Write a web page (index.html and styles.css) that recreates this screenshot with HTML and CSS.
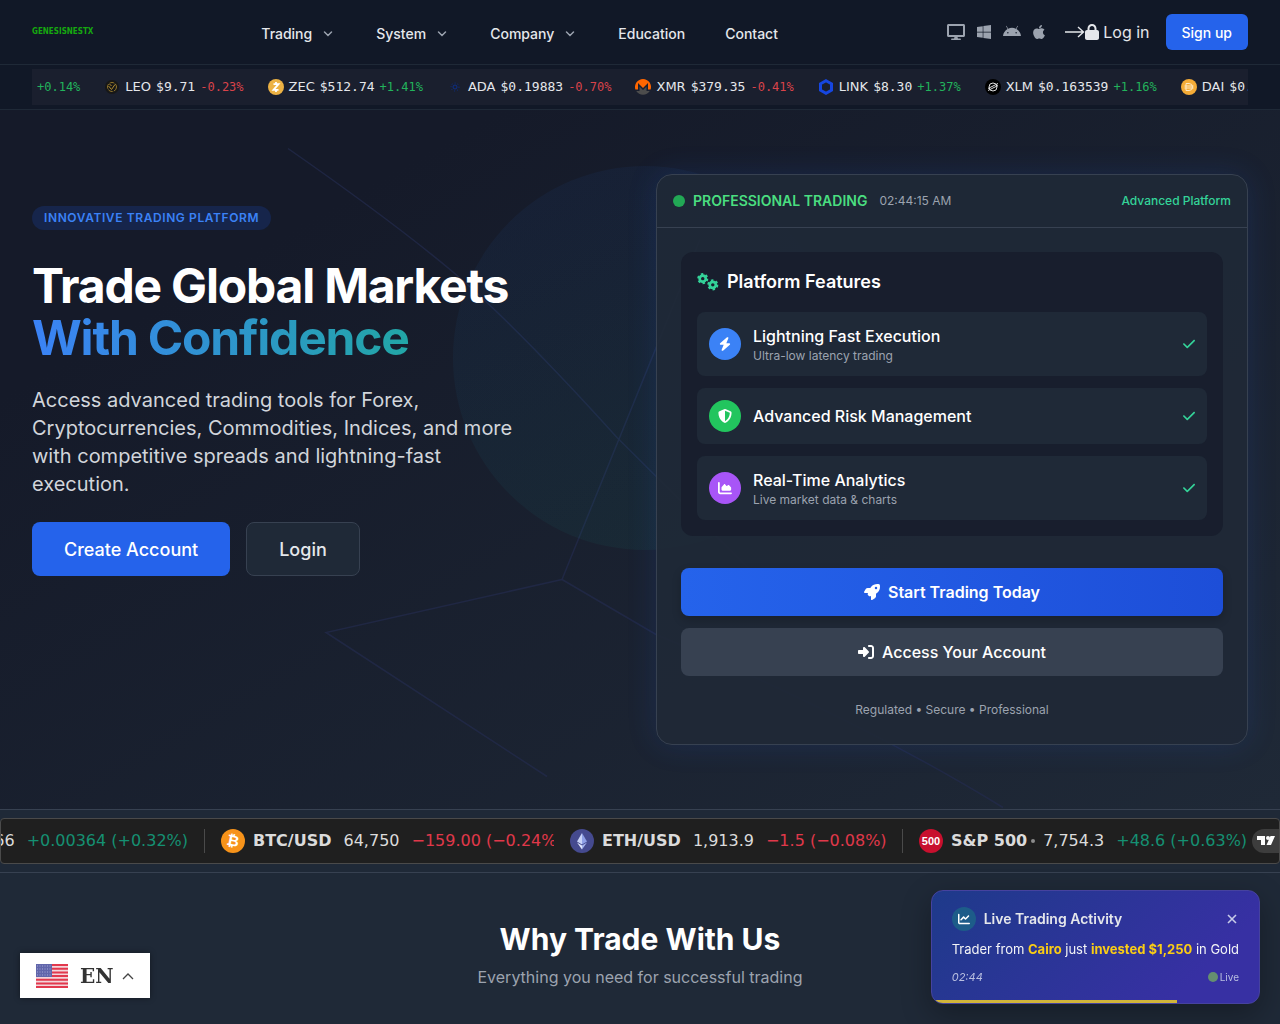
FILE: index.html
```html
<!DOCTYPE html>
<html lang="en">
<head>
  <meta charset="UTF-8">
  <meta name="viewport" content="width=device-width, initial-scale=1.0">
  <title>GenesisNestX</title>
  <link rel="stylesheet" href="styles.css">
</head>
<body>

  <header class="header">
    <a href="#" class="logo">GENESISNESTX</a>

    <nav class="nav">
      <button class="nav-link">Trading <svg class="chevron" viewBox="0 0 16 16"><path d="M4.500 6l3.500 3.500 3.500-3.500"/></svg></button>
      <button class="nav-link">System <svg class="chevron" viewBox="0 0 16 16"><path d="M4.500 6l3.500 3.500 3.500-3.500"/></svg></button>
      <button class="nav-link">Company <svg class="chevron" viewBox="0 0 16 16"><path d="M4.500 6l3.500 3.500 3.500-3.500"/></svg></button>
      <a href="#" class="nav-link">Education</a>
      <a href="#" class="nav-link">Contact</a>
    </nav>

    <div class="header-right">
      <div class="platforms">
        <a href="#" aria-label="Desktop"><svg width="18" height="16" viewBox="0 0 576 512"><path d="M528 0H48C21.500 0 0 21.500 0 48v320c0 26.500 21.500 48 48 48h192l-16 48h-72c-13.300 0-24 10.700-24 24s10.700 24 24 24h272c13.300 0 24-10.700 24-24s-10.700-24-24-24h-72l-16-48h192c26.500 0 48-21.500 48-48V48c0-26.500-21.500-48-48-48zm-16 352H64V64h448v288z"/></svg></a>
        <a href="#" aria-label="Windows"><svg width="14" height="16" viewBox="0 0 448 512"><path d="M0 93.700l183.600-25.300v177.400H0V93.700zm0 324.600l183.600 25.300V268.400H0v149.900zm203.800 28L448 480V268.400H203.800v177.900zm0-380.600v180.100H448V32L203.800 65.700z"/></svg></a>
        <a href="#" aria-label="Android"><svg width="18" height="16" viewBox="0 0 576 512"><path d="M420.550,301.930a24,24,0,1,1,24-24,24,24,0,0,1-24,24m-265.100,0a24,24,0,1,1,24-24,24,24,0,0,1-24,24m273.700-144.480,47.940-83a10,10,0,1,0-17.270-10h0l-48.540,84.070a301.250,301.250,0,0,0-246.560,0L116.180,64.450a10,10,0,1,0-17.270,10h0l47.940,83C64.530,202.220,8.240,285.550,0,384H576c-8.240-98.450-64.540-181.780-146.850-226.550"/></svg></a>
        <a href="#" aria-label="Apple"><svg width="12" height="16" viewBox="0 0 384 512"><path d="M318.700 268.700c-.2-36.700 16.400-64.400 50-84.800-18.800-26.900-47.200-41.700-84.700-44.600-35.500-2.800-74.300 20.700-88.500 20.700-15 0-49.400-19.700-76.400-19.700C63.300 141.200 4 184.800 4 273.500q0 39.300 14.400 81.200c12.800 36.700 59 126.700 107.200 125.200 25.200-.6 43-17.900 75.800-17.900 31.800 0 48.300 17.900 76.400 17.900 48.600-.7 90.400-82.500 102.600-119.300-65.200-30.700-61.700-90-61.700-91.900zm-56.600-164.200c27.300-32.400 24.800-61.900 24-72.500-24.100 1.400-52 16.400-67.900 34.900-17.500 19.800-27.800 44.300-25.600 71.900 26.100 2 49.900-11.400 69.500-34.300z"/></svg></a>
      </div>
      <a href="#" class="login-link">
        <svg class="login-arrow" width="20" height="16" viewBox="0 0 20 16"><path d="M0 8h18M13 3l5.500 5-5.500 5"/></svg>
        <svg width="14" height="16" viewBox="0 0 448 512"><path fill="currentColor" d="M144 144v48H304V144c0-44.200-35.800-80-80-80s-80 35.800-80 80zM80 192V144C80 64.500 144.500 0 224 0s144 64.500 144 144v48h16c35.300 0 64 28.700 64 64V448c0 35.300-28.700 64-64 64H64c-35.300 0-64-28.700-64-64V256c0-35.300 28.700-64 64-64H80z"/></svg>
        <span>Log in</span>
      </a>
      <button class="btn-signup">Sign up</button>
    </div>
  </header>

  <div class="coin-bar">
    <div class="coin-track">
      <div class="coin"><span class="change up">+0.14%</span></div>
      <div class="coin">
        <svg width="16" height="16" viewBox="0 0 16 16"><circle cx="8" cy="8" r="7" fill="#171717"/><circle cx="8" cy="8" r="4.500" fill="none" stroke="#8f742c" stroke-dasharray="5 1"/><path d="M4.500 7l3 3.500 3.500-5M5.500 5l2 2" fill="none" stroke="#b08c30"/></svg>
        <span class="sym">LEO</span><span class="price">$9.71</span><span class="change down">-0.23%</span>
      </div>
      <div class="coin">
        <svg width="16" height="16" viewBox="0 0 16 16"><circle cx="8" cy="8" r="8" fill="#ecb244"/><path d="M5.500 5.200h5l-5 5.600h5M8 3v2M8 11v2" fill="none" stroke="#fff" stroke-width="1.800"/></svg>
        <span class="sym">ZEC</span><span class="price">$512.74</span><span class="change up">+1.41%</span>
      </div>
      <div class="coin">
        <svg width="16" height="16" viewBox="0 0 16 16" fill="none" stroke="#0c2f8a"><circle cx="8" cy="8" r="2"/><circle cx="8" cy="8" r="4" stroke-dasharray="1 2"/></svg>
        <span class="sym">ADA</span><span class="price">$0.19883</span><span class="change down">-0.70%</span>
      </div>
      <div class="coin">
        <svg width="16" height="16" viewBox="0 0 16 16"><path d="M8 0a8 8 0 0 0-7.600 10.500H3V4l5 5 5-5v6.500h2.600A8 8 0 0 0 8 0z" fill="#f60"/><path d="M1.200 12H4.500V7.500L8 11l3.500-3.500V12h3.300A8 8 0 0 1 1.200 12z" fill="#4c4c4c"/></svg>
        <span class="sym">XMR</span><span class="price">$379.35</span><span class="change down">-0.41%</span>
      </div>
      <div class="coin">
        <svg width="16" height="16" viewBox="0 0 16 16"><path d="M8 1.700l5.500 3.100v6.400L8 14.300l-5.500-3.100V4.800z" fill="none" stroke="#1646e0" stroke-width="3"/></svg>
        <span class="sym">LINK</span><span class="price">$8.30</span><span class="change up">+1.37%</span>
      </div>
      <div class="coin">
        <svg width="16" height="16" viewBox="0 0 16 16"><circle cx="8" cy="8" r="8" fill="#000"/><g fill="none" stroke="#ddd"><circle cx="8" cy="8" r="4"/><path d="M3 9.500L13 4.500M3 11.500L13 6.500"/></g></svg>
        <span class="sym">XLM</span><span class="price">$0.163539</span><span class="change up">+1.16%</span>
      </div>
      <div class="coin">
        <svg width="16" height="16" viewBox="0 0 16 16"><circle cx="8" cy="8" r="8" fill="#f5ac37"/><path d="M5 4.500h3a3.500 3.500 0 0 1 0 7H5zM3.500 7h9M3.500 9h9" fill="none" stroke="#ffe9c4"/></svg>
        <span class="sym">DAI</span><span class="price">$0.99982</span><span class="change up">+0.01%</span>
      </div>
    </div>
  </div>

  <section class="hero">
    <!-- decorative network lines and blob -->
    <svg class="hero-lines" viewBox="0 0 1280 700" preserveAspectRatio="xMidYMid slice">
      <path d="M288 39Q390 110 450 160T617 328L760 470M700 130L562 470M562 470L326 523L547 667M562 470L656 525Q860 610 1003 698"/>
    </svg>
    <div class="hero-blob"></div>

    <div class="hero-text">
      <span class="badge">INNOVATIVE TRADING PLATFORM</span>
      <h1>Trade Global Markets <span class="gradient-text">With Confidence</span></h1>
      <p>Access advanced trading tools for Forex, Cryptocurrencies, Commodities, Indices, and more with competitive spreads and lightning-fast execution.</p>
      <div class="hero-buttons">
        <button class="btn-create">Create Account</button>
        <button class="btn-login">Login</button>
      </div>
    </div>

    <div class="card">
      <div class="card-head">
        <span class="dot"></span>
        <span class="card-title">PROFESSIONAL TRADING</span>
        <span class="clock">02:44:15 AM</span>
        <span class="card-tag">Advanced Platform</span>
      </div>
      <div class="card-body">
        <div class="features">
          <h3>
            <svg width="22" height="20" viewBox="0 0 23 20" fill="none" stroke="#34d399"><circle cx="6" cy="6.500" r="3.200" stroke-width="2.800"/><circle cx="6" cy="6.500" r="4.800" stroke-width="2" stroke-dasharray="2.500 2.526"/><circle cx="16.500" cy="13" r="3.200" stroke-width="2.800"/><circle cx="16.500" cy="13" r="4.800" stroke-width="2" stroke-dasharray="2.500 2.526"/></svg>
            Platform Features
          </h3>
          <div class="feature">
            <span class="feature-icon blue"><svg width="12" height="14" viewBox="0 0 448 512"><path d="M349.400 44.600c5.900-13.700 1.500-29.700-10.600-38.500s-28.600-8-39.900 1.800l-256 224c-10 8.800-13.600 22.900-8.900 35.300S50.700 288 64 288H175.500L98.600 467.400c-5.900 13.700-1.500 29.700 10.600 38.500s28.600 8 39.900-1.800l256-224c10-8.800 13.600-22.900 8.900-35.300s-16.600-20.700-30-20.700H272.500L349.400 44.600z"/></svg></span>
            <div class="feature-text">
              <div class="feature-name">Lightning Fast Execution</div>
              <div class="feature-sub">Ultra-low latency trading</div>
            </div>
            <svg class="check" width="12" height="14" viewBox="0 0 448 512"><path d="M438.600 105.400c12.500 12.500 12.500 32.800 0 45.300l-256 256c-12.500 12.500-32.800 12.500-45.300 0l-128-128c-12.500-12.500-12.500-32.800 0-45.300s32.800-12.500 45.300 0L160 338.700 393.400 105.400c12.500-12.500 32.800-12.500 45.300 0z"/></svg>
          </div>
          <div class="feature">
            <span class="feature-icon green"><svg width="14" height="14" viewBox="0 0 512 512"><path d="M256 0c4.600 0 9.200 1 13.400 2.900L457.700 82.800c22 9.300 38.400 31 38.300 57.200c-.5 99.200-41.300 280.700-213.600 363.200c-16.700 8-36.100 8-52.800 0C57.300 420.700 16.500 239.200 16 140c-.1-26.200 16.300-47.900 38.300-57.200L242.700 2.900C246.800 1 251.400 0 256 0zm0 66.800V444.800C394 378 431.100 230.100 432 141.400L256 66.800z"/></svg></span>
            <div class="feature-text">
              <div class="feature-name">Advanced Risk Management</div>
            </div>
            <svg class="check" width="12" height="14" viewBox="0 0 448 512"><path d="M438.600 105.400c12.500 12.500 12.500 32.800 0 45.300l-256 256c-12.500 12.500-32.800 12.500-45.300 0l-128-128c-12.500-12.500-12.500-32.800 0-45.300s32.800-12.500 45.300 0L160 338.700 393.400 105.400c12.500-12.500 32.800-12.500 45.300 0z"/></svg>
          </div>
          <div class="feature">
            <span class="feature-icon purple"><svg width="14" height="14" viewBox="0 0 512 512"><path d="M64 64c0-17.700-14.300-32-32-32S0 46.300 0 64V400c0 44.200 35.800 80 80 80H480c17.700 0 32-14.300 32-32s-14.300-32-32-32H80c-8.800 0-16-7.200-16-16V64zm96 288H448c17.700 0 32-14.300 32-32V251.800c0-7.600-2.700-15-7.700-20.800l-65.800-76.800c-12.100-14.200-33.700-15-46.900-1.800l-21 21c-10 10-26.400 9.200-35.400-1.600l-39.200-47c-12.600-15.100-35.700-15.400-48.700-.6L135.900 215c-5.100 5.800-7.900 13.300-7.900 21.100v84c0 17.700 14.300 32 32 32z"/></svg></span>
            <div class="feature-text">
              <div class="feature-name">Real-Time Analytics</div>
              <div class="feature-sub">Live market data &amp; charts</div>
            </div>
            <svg class="check" width="12" height="14" viewBox="0 0 448 512"><path d="M438.600 105.400c12.500 12.500 12.500 32.800 0 45.300l-256 256c-12.500 12.500-32.800 12.500-45.300 0l-128-128c-12.500-12.500-12.500-32.800 0-45.300s32.800-12.500 45.300 0L160 338.700 393.400 105.400c12.500-12.500 32.800-12.500 45.300 0z"/></svg>
          </div>
        </div>

        <button class="btn-wide primary">
          <svg width="16" height="16" viewBox="0 0 512 512"><path d="M156.600 384.900L125.700 354c-8.500-8.500-11.500-20.800-7.700-32.200c3-8.900 7-20.500 11.800-33.800L24 288c-8.600 0-16.600-4.600-20.900-12.100s-4.200-16.700 .2-24.100l52.500-88.500c13-21.900 36.500-35.300 61.900-35.300l82.300 0c2.400-4 4.800-7.700 7.200-11.300C289.100-4.100 411.100-8.100 483.900 5.300c11.600 2.100 20.600 11.200 22.800 22.800c13.400 72.900 9.300 194.800-111.400 276.700c-3.500 2.400-7.300 4.800-11.300 7.200v82.300c0 25.400-13.400 49-35.300 61.900l-88.500 52.500c-7.400 4.400-16.600 4.500-24.100 .2s-12.100-12.200-12.100-20.900V380.800c-14.100 4.900-26.400 8.900-35.700 11.900c-11.200 3.600-23.400 .5-31.800-7.800zM384 168a40 40 0 1 0 0-80 40 40 0 1 0 0 80z"/></svg>
          Start Trading Today
        </button>
        <button class="btn-wide secondary">
          <svg width="16" height="16" viewBox="0 0 512 512"><path d="M217.900 105.900L340.700 228.700c7.200 7.200 11.300 17.100 11.300 27.300s-4.100 20.100-11.300 27.300L217.900 406.100c-6.400 6.400-15 9.900-24 9.900c-18.700 0-33.900-15.200-33.900-33.900l0-62.100L32 320c-17.700 0-32-14.300-32-32l0-64c0-17.700 14.300-32 32-32l128 0 0-62.100c0-18.700 15.200-33.900 33.900-33.900c9 0 17.600 3.600 24 9.900zM352 416l64 0c17.700 0 32-14.300 32-32l0-256c0-17.700-14.300-32-32-32l-64 0c-17.700 0-32-14.300-32-32s14.300-32 32-32l64 0c53 0 96 43 96 96l0 256c0 53-43 96-96 96l-64 0c-17.700 0-32-14.300-32-32s14.300-32 32-32z"/></svg>
          Access Your Account
        </button>
        <p class="card-note">Regulated • Secure • Professional</p>
      </div>
    </div>
  </section>

  <section class="tape-wrap">
    <div class="tape">
      <div class="tape-track">
        <div class="quote sep end"><span>1.14766</span><span class="pos">+0.00364 (+0.32%)</span></div>
        <div class="quote">
          <svg width="24" height="24" viewBox="0 0 24 24"><circle cx="12" cy="12" r="12" fill="#f7931a"/><text x="12" y="17" class="btc-sign" transform="rotate(12 12 12)">₿</text></svg>
          <b>BTC/USD</b><span>64,750</span><span class="neg">−159.00 (−0.24%)</span>
        </div>
        <div class="quote sep">
          <svg width="24" height="24" viewBox="0 0 24 24"><circle cx="12" cy="12" r="12" fill="#454a8f"/><path d="M12 4l-5 8.500 5 3z" fill="#c9d3f7"/><path d="M12 4l5 8.500-5 3z" fill="#8fa0e6"/><path d="M7 13.500l5 7v-4z" fill="#dfe5fb"/><path d="M17 13.500l-5 7v-4z" fill="#a4b2ec"/></svg>
          <b>ETH/USD</b><span>1,913.9</span><span class="neg">−1.5 (−0.08%)</span>
        </div>
        <div class="quote">
          <svg width="24" height="24" viewBox="0 0 24 24"><circle cx="12" cy="12" r="12" fill="#c8102e"/><text x="12" y="16" class="spx-sign">500</text></svg>
          <b class="closed">S&amp;P 500</b><span>7,754.3</span><span class="pos">+48.6 (+0.63%)</span>
        </div>
      </div>
      <a href="#" class="tv-badge" aria-label="TradingView"><svg width="18" height="10" viewBox="0 0 18 10"><path fill="#fff" d="M0 0h8v9H4V4H0zM13.500 0H18l-4 9H9.500z"/><circle cx="11" cy="2" r="2" fill="#fff"/></svg></a>
    </div>
  </section>

  <section class="why">
    <h2>Why Trade With Us</h2>
    <p>Everything you need for successful trading</p>
  </section>

  <button class="lang">
    <svg width="32" height="24" viewBox="0 0 32 24"><rect width="32" height="24" fill="#f3d5da"/><path d="M0 1h32M0 4.700h32M0 8.400h32M0 12.100h32M0 15.800h32M0 19.500h32M0 23h32" stroke="#e2384d" stroke-width="2"/><rect width="16" height="13" fill="#6166ab"/><path d="M1 2h15M1 5h15M1 8h15M1 11h15" stroke="#a5a8d6" stroke-dasharray="1 1.500"/></svg>
    <span>EN</span>
    <svg width="12" height="8" viewBox="0 0 12 8"><path d="M1 7l5-5 5 5" fill="none" stroke="#444" stroke-width="1.300"/></svg>
  </button>

  <div class="toast">
    <div class="toast-head">
      <span class="toast-icon"><svg width="12" height="12" viewBox="0 0 512 512"><path d="M64 64c0-17.700-14.300-32-32-32S0 46.300 0 64V400c0 44.200 35.800 80 80 80H480c17.700 0 32-14.300 32-32s-14.300-32-32-32H80c-8.800 0-16-7.200-16-16V64zm406.600 86.600c12.500-12.500 12.500-32.800 0-45.300s-32.800-12.500-45.300 0L320 210.700l-57.400-57.400c-12.500-12.500-32.800-12.500-45.300 0l-112 112c-12.500 12.500-12.500 32.800 0 45.300s32.800 12.500 45.300 0L240 221.300l57.400 57.400c12.500 12.500 32.800 12.500 45.300 0l128-128z"/></svg></span>
      <span class="toast-title">Live Trading Activity</span>
      <button class="toast-close" aria-label="Close"><svg width="10" height="10" viewBox="0 0 10 10"><path d="M1 1l8 8M9 1l-8 8"/></svg></button>
    </div>
    <div class="toast-msg">Trader from <b>Cairo</b> just <b>invested $1,250</b> in Gold</div>
    <div class="toast-meta"><i>02:44</i><span class="live">Live</span></div>
    <div class="toast-progress"></div>
  </div>

</body>
</html>
```

FILE: styles.css
```css
* { box-sizing: border-box; }
body { margin: 0; min-height: 100vh; background: #1f2937; color: #fff; font-family: Inter, sans-serif; font-size: 16px; line-height: 24px; overflow: hidden; }
h1, h2, h3, p { margin: 0; }
a { color: inherit; text-decoration: none; }
button { font-family: inherit; border: none; cursor: pointer; color: inherit; padding: 0; background: none; }
svg { flex: none; display: block; }

/* header */
.header { display: flex; align-items: center; justify-content: space-between; height: 65px; padding: 0 32px; background: #111827; border-bottom: 1px solid #1f2937; }
.logo { width: 64px; color: #16a80f; font-family: "Liberation Sans Narrow", "DejaVu Sans Condensed", sans-serif; font-size: 8px; font-weight: bold; white-space: nowrap; }
.nav { display: flex; align-items: center; gap: 40px; padding-top: 4px; }
.nav-link { display: flex; align-items: center; gap: 8px; font-size: 14px; font-weight: 500; line-height: 20px; color: #e5e7eb; }
.chevron { width: 16px; height: 16px; fill: none; stroke: #9ca3af; stroke-width: 1.5; stroke-linecap: round; }
.header-right { display: flex; align-items: center; gap: 16px; }
.platforms { display: flex; align-items: center; gap: 12px; padding: 0 4px; }
.platforms svg { fill: #9ca3af; }
.login-link { display: flex; align-items: center; color: #e5e7eb; }
.login-link span { padding-left: 4px; }
.login-arrow { fill: none; stroke: #e5e7eb; stroke-width: 1.4; }
.btn-signup { height: 36px; padding: 0 16px; border-radius: 6px; background: #2563eb; color: #fff; font-size: 14px; font-weight: 500; }

/* coin ticker */
.coin-bar { padding: 4px 32px; background: #111827; border-bottom: 1px solid #1f2937; }
.coin-track { display: flex; align-items: center; gap: 24px; height: 36px; padding-left: 5px; background: #1a1f2e; overflow: hidden; white-space: nowrap; }
.coin { display: flex; flex: none; align-items: center; gap: 5px; font-family: "DejaVu Sans", sans-serif; font-size: 13px; color: #e5e7eb; }
.price, .change { font-family: "DejaVu Sans Mono", monospace; }
.change { font-size: 12px; }
.up { color: #22b35c; }
.down { color: #d9434a; }

/* hero */
.hero { position: relative; display: grid; grid-template-columns: 1fr 1fr; gap: 32px; padding: 64px 32px; background: linear-gradient(150deg, #151a29 20%, #1f2937); overflow: hidden; }
.hero-lines { position: absolute; inset: 0; width: 100%; height: 100%; fill: none; stroke: #232b4d; stroke-width: 1.5; opacity: .7; }
.hero-blob { position: absolute; left: 453px; top: 56px; width: 384px; height: 384px; border-radius: 50%; background: linear-gradient(160deg, #2563eb, #10b981); opacity: .06; }
.hero-text { position: relative; padding-top: 32px; }
.badge { display: block; width: fit-content; padding: 4px 12px; border-radius: 12px; background: #16254b; color: #3b82f6; font-size: 12px; line-height: 16px; font-weight: 600; letter-spacing: .05em; }
h1 { margin-top: 30px; font-size: 48px; line-height: 52px; font-weight: 700; letter-spacing: -.025em; }
.gradient-text { display: block; width: fit-content; background: linear-gradient(90deg, #3b82f6, #22a6a6); -webkit-background-clip: text; background-clip: text; color: transparent; }
.hero-text p { max-width: 512px; margin-top: 22px; font-size: 20px; line-height: 28px; color: #d1d5db; }
.hero-buttons { display: flex; gap: 16px; margin-top: 24px; }
.btn-create, .btn-login { height: 54px; padding: 0 32px; border-radius: 8px; font-size: 18px; font-weight: 500; }
.btn-create { background: #2563eb; }
.btn-login { background: #1f2937; border: 1px solid #374151; color: #e5e7eb; }

/* platform card */
.card { position: relative; border: 1px solid #374151; border-radius: 16px; background: rgba(31, 41, 55, .93); box-shadow: 0 0 30px rgba(37, 99, 235, .15); }
.card-head { display: flex; align-items: center; height: 53px; padding: 0 16px; border-bottom: 1px solid #374151; font-size: 12px; line-height: 16px; }
.dot { width: 12px; height: 12px; margin-right: 8px; border-radius: 50%; background: #22a855; }
.card-title { margin-right: 12px; color: #4ade80; font-size: 14px; font-weight: 600; }
.clock { color: #9ca3af; }
.card-tag { margin-left: auto; color: #34d399; font-weight: 500; }
.card-body { padding: 24px; }
.features { display: flex; flex-direction: column; gap: 12px; margin-bottom: 32px; padding: 16px; border-radius: 12px; background: #181e2d; }
.features h3 { display: flex; align-items: center; gap: 8px; height: 28px; margin-bottom: 4px; font-size: 18px; line-height: 28px; font-weight: 600; }
.feature { display: flex; align-items: center; gap: 12px; padding: 12px; border-radius: 8px; background: #1f2937; }
.feature-text { flex: 1; }
.feature-icon { display: flex; align-items: center; justify-content: center; width: 32px; height: 32px; border-radius: 50%; }
.feature-icon svg { fill: #fff; }
.blue { background: #3b82f6; }
.green { background: #22c55e; }
.purple { background: #a855f7; }
.feature-name { font-weight: 500; line-height: 24px; }
.feature-sub { color: #9ca3af; font-size: 12px; line-height: 16px; }
.check { fill: #34d399; }
.btn-wide { display: flex; align-items: center; justify-content: center; gap: 8px; width: 100%; height: 48px; margin-bottom: 12px; border-radius: 8px; font-size: 16px; font-weight: 600; }
.btn-wide svg { fill: #fff; }
.primary { background: linear-gradient(90deg, #2563eb, #1d4ed8); box-shadow: 0 4px 10px rgba(0, 0, 0, .2); }
.secondary { background: #374151; font-weight: 500; }
.card-note { padding-top: 12px; text-align: center; color: #9ca3af; font-size: 12px; line-height: 20px; }

/* market tape */
.tape-wrap { padding: 8px 0; background: #1f2937; border-top: 1px solid #374151; border-bottom: 1px solid #374151; }
.tape { position: relative; height: 46px; border: 1px solid #4a4a4a; border-radius: 4px; background: #1f1f1f; overflow: hidden; }
.tape-track { display: flex; align-items: center; height: 100%; margin-left: -145px; font-family: "DejaVu Sans", sans-serif; font-size: 16px; color: #dbdbdb; white-space: nowrap; }
.quote { display: flex; flex: none; align-items: center; width: 349px; height: 24px; padding: 0 0 0 16px; overflow: hidden; }
.quote svg { margin-right: 8px; }
.quote b, .quote span { margin-right: 12px; }
.quote.sep { border-right: 1px solid #4a4a4a; }
.quote.end { justify-content: flex-end; padding-right: 4px; }
.closed { display: flex; align-items: center; gap: 4px; }
.quote b.closed { margin-right: 8px; }
.closed::after { content: ""; width: 4px; height: 4px; border-radius: 50%; background: #8c8c8c; }
.pos { color: #159072; }
.neg { color: #e0384a; }
.btc-sign { fill: #fff; font: bold 15px "DejaVu Sans", sans-serif; text-anchor: middle; }
.spx-sign { fill: #fff; font: bold 11px "Liberation Sans", sans-serif; text-anchor: middle; }
.tv-badge { position: absolute; right: 0; top: 10px; display: flex; align-items: center; justify-content: center; width: 27px; height: 24px; border-radius: 12px 0 0 12px; background: #3d3d3d; }

/* why section */
.why { padding: 48px 32px; text-align: center; background: #1f2937; }
.why h2 { font-size: 30px; line-height: 36px; font-weight: 700; }
.why p { margin-top: 8px; color: #9ca3af; }

/* language switch */
.lang { position: fixed; left: 20px; bottom: 26px; display: flex; align-items: center; height: 45px; padding: 0 16px; background: #fff; color: #333; font-family: "DejaVu Serif", serif; font-size: 20px; font-weight: bold; box-shadow: 0 0 6px rgba(0, 0, 0, .4); }
.lang span { margin: 0 8px 0 12px; }

/* activity toast */
.toast { position: fixed; right: 20px; bottom: 20px; padding: 16px 20px; border: 1px solid #46429f; border-radius: 12px; background: linear-gradient(135deg, #1e3a8a, #3730a3 80%); box-shadow: 0 10px 30px rgba(0, 0, 0, .3); overflow: hidden; white-space: nowrap; }
.toast-head { display: flex; align-items: center; gap: 8px; }
.toast-icon { display: flex; align-items: center; justify-content: center; width: 24px; height: 24px; border-radius: 50%; background: #1d5c89; }
.toast-icon svg { fill: #fff; }
.toast-title { flex: 1; color: #e5e7eb; font-size: 14px; font-weight: 600; }
.toast-close { padding: 2px; }
.toast-close svg { fill: none; stroke: #c7cbe8; stroke-width: 1.6; }
.toast-msg { margin: 8px 0; font-size: 13px; line-height: 20px; color: #f3f4f6; }
.toast-msg b { color: #facc15; }
.toast-meta { display: flex; align-items: center; justify-content: space-between; color: #b9bfe0; font-size: 11px; line-height: 20px; }
.live { display: flex; align-items: center; gap: 2px; font-size: 10px; }
.live::before { content: ""; width: 10px; height: 10px; border-radius: 50%; background: #658f70; }
.toast-progress { position: absolute; left: 0; bottom: 0; width: 75%; height: 3px; background: #d1b53b; }

@media (max-width: 900px) {
  .nav { display: none; }
  .hero { grid-template-columns: 1fr; }
}
```
